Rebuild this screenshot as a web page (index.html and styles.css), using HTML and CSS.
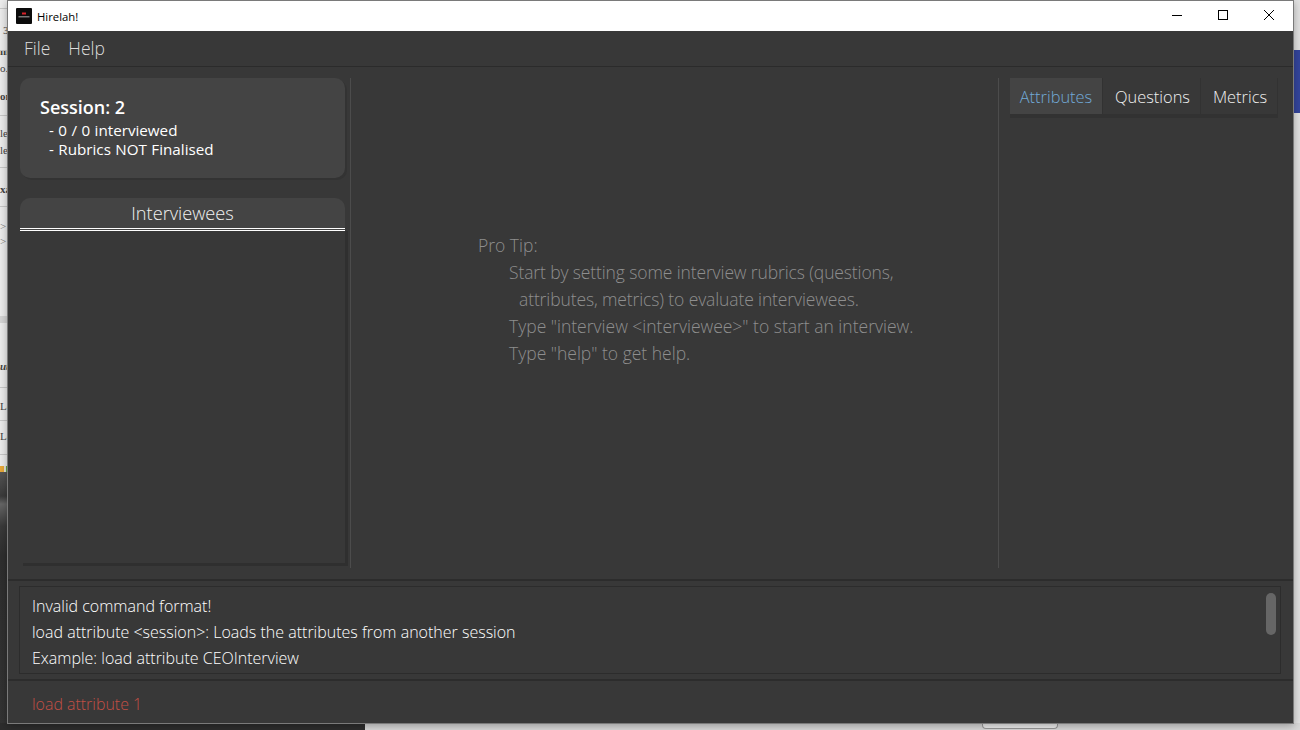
FILE: index.html
```html
<!DOCTYPE html>
<html lang="en">
<head>
<meta charset="utf-8">
<title>Hirelah!</title>
<link rel="stylesheet" href="styles.css">
</head>
<body>
<div class="desktop">
  <div class="bg-left">
    <span class="frag f1">3</span>
    <span class="frag f2">m</span>
    <span class="frag f3">o.</span>
    <span class="frag f4">on</span>
    <span class="frag f5">le</span>
    <span class="frag f6">le</span>
    <span class="frag f7">xa</span>
    <span class="frag f8">&gt;</span>
    <span class="frag f9">&gt;</span>
    <span class="frag f10">ut</span>
    <span class="frag f11">Lo</span>
    <span class="frag f12">Lo</span>
    <div class="rule r1"></div>
    <div class="rule r2"></div>
    <div class="rule r3"></div>
    <div class="rule r4"></div>
    <div class="rule r5"></div>
    <div class="band"></div>
    <div class="rule r6"></div>
    <div class="rule r7"></div>
    <div class="rule r8"></div>
    <div class="swatch"></div>
  </div>
  <div class="bg-dark"></div>
  <div class="bg-bottom"><div class="bg-button"></div></div>
  <div class="bg-right"><span class="blue"></span></div>

  <div class="window">
    <header class="titlebar">
      <svg class="app-icon" viewBox="0 0 16 16" aria-hidden="true">
        <rect width="16" height="16" rx="1" fill="#0b0b0b"/>
        <rect x="6" y="4.5" width="4" height="2" fill="#d8232a"/>
        <rect x="2.5" y="8" width="11" height="1.5" fill="#777"/>
      </svg>
      <span class="app-title">Hirelah!</span>
      <div class="controls">
        <svg class="ctl" viewBox="0 0 46 30" aria-hidden="true"><path d="M18 14.5h10" stroke="#000" fill="none"/></svg>
        <svg class="ctl" viewBox="0 0 46 30" aria-hidden="true"><rect x="18.5" y="9.5" width="9" height="9" stroke="#000" fill="none"/></svg>
        <svg class="ctl" viewBox="0 0 46 30" aria-hidden="true"><path d="M18 9l10 10M28 9L18 19" stroke="#000" fill="none"/></svg>
      </div>
    </header>
    <nav class="menubar">
      <span class="menu-item">File</span>
      <span class="menu-item">Help</span>
    </nav>
    <main class="main">
      <aside class="left">
        <section class="session">
          <h2 class="session-title">Session: 2</h2>
          <p class="session-line">- 0 / 0 interviewed</p>
          <p class="session-line">- Rubrics NOT Finalised</p>
        </section>
        <section class="people">
          <h2 class="people-head">Interviewees</h2>
          <div class="people-list"></div>
        </section>
      </aside>
      <section class="center">
        <div class="tip">
          <p class="tip-line">Pro Tip:</p>
          <p class="tip-line in1 tight">Start by setting some interview rubrics (questions,</p>
          <p class="tip-line in2 tight">attributes, metrics) to evaluate interviewees.</p>
          <p class="tip-line in1">Type "interview &lt;interviewee&gt;" to start an interview.</p>
          <p class="tip-line in1">Type "help" to get help.</p>
        </div>
      </section>
      <aside class="right">
        <div class="tabs">
          <span class="tab tab-a active">Attributes</span>
          <span class="tab tab-q">Questions</span>
          <span class="tab tab-m">Metrics</span>
        </div>
      </aside>
    </main>
    <section class="result-wrap">
      <div class="result">
        <p class="result-line">Invalid command format!</p>
        <p class="result-line">load attribute &lt;session&gt;: Loads the attributes from another session</p>
        <p class="result-line">Example: load attribute CEOInterview</p>
        <div class="thumb"></div>
      </div>
    </section>
    <footer class="command">load attribute 1</footer>
  </div>
</div>
</body>
</html>
```
FILE: styles.css
```css
* { box-sizing: border-box; }
html, body { margin: 0; height: 100%; overflow: hidden; }
body { font-family: "Open Sans", "Noto Sans", sans-serif; background: #e4e4e4; }
p, h2 { margin: 0; font-weight: 400; }

.desktop { position: relative; width: 1300px; height: 730px; overflow: hidden; }

/* backdrop: other windows peeking out around the app */
.bg-left { position: absolute; left: 0; top: 0; width: 8px; height: 472px; background: #ececec; overflow: hidden; }
.frag { position: absolute; font: 11px "Liberation Serif", serif; color: #444; }
.f1 { left: 3px; top: 24px; }
.f2 { left: 0; top: 45px; font-weight: 700; }
.f3 { left: 0; top: 62px; }
.f4 { left: 0; top: 90px; font-weight: 700; }
.f5 { left: 0; top: 127px; }
.f6 { left: 0; top: 144px; }
.f7 { left: 0; top: 183px; font-weight: 700; }
.f8 { left: 0; top: 220px; color: #777; }
.f9 { left: 0; top: 235px; color: #777; }
.f10 { left: 0; top: 360px; font-style: italic; font-weight: 700; }
.f11 { left: 0; top: 400px; }
.f12 { left: 0; top: 430px; }
.rule { position: absolute; left: 0; width: 8px; height: 1px; background: #c8c8c8; }
.r1 { top: 8px; }
.r2 { top: 50px; }
.r3 { top: 115px; }
.r4 { top: 167px; }
.r5 { top: 206px; }
.band { position: absolute; left: 0; top: 316px; width: 8px; height: 7px; background: #d4d4d4; }
.r6 { top: 387px; }
.r7 { top: 420px; }
.r8 { top: 454px; }
.swatch { position: absolute; left: 0; top: 466px; width: 8px; height: 6px; background: linear-gradient(90deg, #e8a83a 4px, #e6e6d8 4px, #e6e6d8 6px, #5fa04a 6px); }
.bg-dark { position: absolute; left: 0; top: 472px; width: 8px; height: 258px; background: linear-gradient(#555, #3a3a3a 24px, #666 32px, #3a3a3a 54px, #2e2e2e 84px, #333); }
.bg-bottom { position: absolute; left: 0; bottom: 0; width: 1300px; height: 7px; background: linear-gradient(90deg, #2d2d2d 365px, #d8d8d8 365px); }
.bg-button { position: absolute; left: 982px; top: 0; width: 76px; height: 6px; border: 1px solid #999; border-top: 0; border-radius: 0 0 4px 4px; background: #efefef; }
.bg-right { position: absolute; right: 0; top: 0; width: 7px; height: 723px; background: #e2e2e2; }
.blue { position: absolute; left: 0; top: 50px; width: 7px; height: 63px; background: #34459c; }

/* application window */
.window {
  position: absolute; left: 7px; top: 0; width: 1287px; height: 724px;
  border: 1px solid #7a7a7a; background: #383838;
  display: flex; flex-direction: column;
  box-shadow: 0 2px 8px rgba(0,0,0,.3);
}
.titlebar { flex: 0 0 30px; background: #fff; display: flex; align-items: center; padding-left: 8px; }
.app-icon { width: 16px; height: 16px; }
.app-title { margin-left: 5px; font: 11.3px "Open Sans", sans-serif; color: #000; }
.controls { margin-left: auto; margin-right: 1px; display: flex; }
.ctl { width: 46px; height: 30px; display: block; }

.menubar { flex: 0 0 36px; display: flex; gap: 18px; align-items: center; padding: 0 0 2px 16px; border-bottom: 1px solid #2b2b2b; }
.menu-item { font-size: 17.5px; font-weight: 300; color: #ddd; }

.main { flex: 0 0 514px; display: flex; border-bottom: 2px solid #2c2c2c; padding: 11px 0 11px 12px; }
.left { flex: 0 0 331px; display: flex; flex-direction: column; gap: 20px; border-right: 1px solid #4c4c4c; padding-right: 5px; }
.session { height: 100px; background: #444; border-radius: 10px; padding: 16px 20px; box-shadow: 2px 2px 0 #333; color: #fff; }
.session-title { font-size: 18px; font-weight: 600; line-height: 27px; }
.session-line { font-size: 15.2px; line-height: 19px; padding-left: 9px; word-spacing: .5px; }
.people { flex: 1; display: flex; flex-direction: column; margin-bottom: 2px; }
.people-head {
  height: 33px; background: #444; border-radius: 10px 10px 0 0;
  border-bottom: 3px double #fff; text-align: center;
  font-size: 18.2px; font-weight: 300; line-height: 30px; color: #f0f0f0;
}
.people-list { flex: 1; margin-left: 3px; margin-right: -3px; border-right: 3px solid #2f2f2f; border-bottom: 3px solid #2f2f2f; }

.center { flex: 0 0 648px; border-right: 1px solid #4c4c4c; display: flex; align-items: flex-start; padding: 154px 0 0 127px; }
.tip-line { font-size: 17.5px; font-weight: 300; line-height: 27px; color: #8e8e8e; white-space: nowrap; }
.in1 { padding-left: 31px; }
.in2 { padding-left: 41px; }
.tight { letter-spacing: -.12px; }

.right { flex: 1; padding-left: 11px; }
.tabs { display: flex; gap: 2px; height: 40px; width: 268px; border-bottom: 4px solid #323232; }
.tab { height: 36px; line-height: 37px; text-align: center; font-size: 16.4px; font-weight: 300; color: #f0f0f0; border-right: 1px solid #323232; }
.tab-a { width: 93px; }
.tab-q { width: 96px; }
.tab-m { width: 75px; }
.tab.active { background: #444; color: #72aad8; }

.result-wrap { flex: 0 0 100px; padding: 5px 12px 5px 11px; border-bottom: 2px solid #2c2c2c; }
.result { position: relative; height: 88px; border: 1px solid #2c2c2c; padding: 6px 12px; }
.result-line { font-size: 16px; font-weight: 300; line-height: 26px; color: #fff; white-space: nowrap; }
.thumb { position: absolute; right: 4px; top: 6px; width: 10px; height: 42px; border-radius: 5px; background: #666; }

.command { flex: 1; padding: 12px 0 0 24px; font-size: 15.95px; font-weight: 300; color: #c24f45; }
```
